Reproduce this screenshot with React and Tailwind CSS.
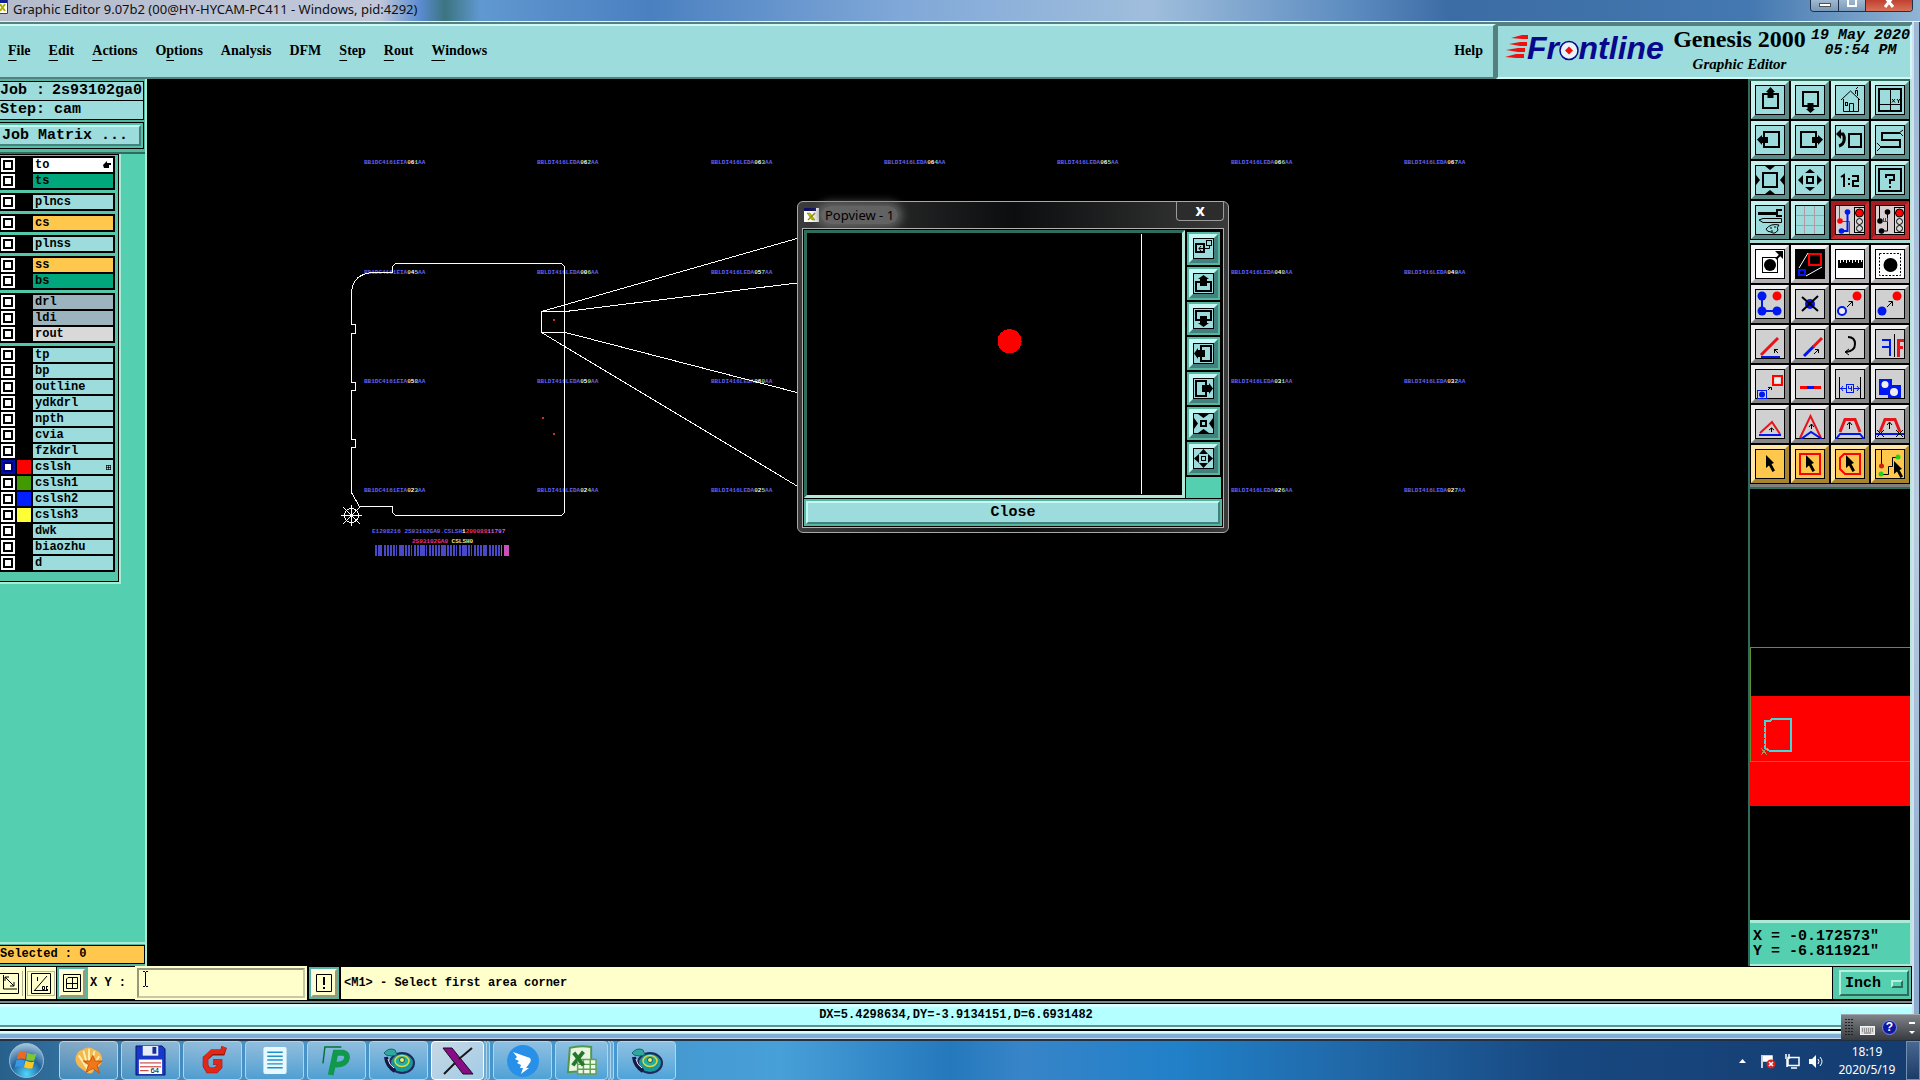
import React from "react";

const MONO = "font-['Liberation_Mono',monospace] font-bold";
const SERIF = "font-['Liberation_Serif',serif] font-bold";
const SANS = "font-['Noto_Sans',sans-serif]";

const MENUS = [
  ["", "F", "ile"],
  ["", "E", "dit"],
  ["", "A", "ctions"],
  ["O", "p", "tions"],
  ["Analysis", "", ""],
  ["DFM", "", ""],
  ["", "S", "tep"],
  ["", "R", "out"],
  ["", "W", "indows"],
];

const AQUA = "bg-[#9cdcdc]";
const LAYER_GROUPS = [
  [
    { name: "to", bg: "bg-white", mark: "hand" },
    { name: "ts", bg: "bg-[#00a67c]" },
  ],
  [{ name: "plncs", bg: AQUA }],
  [{ name: "cs", bg: "bg-[#ffc84c]" }],
  [{ name: "plnss", bg: AQUA }],
  [
    { name: "ss", bg: "bg-[#ffc84c]" },
    { name: "bs", bg: "bg-[#00a67c]" },
  ],
  [
    { name: "drl", bg: "bg-[#9cb4be]" },
    { name: "ldi", bg: "bg-[#9cb4be]" },
    { name: "rout", bg: "bg-[#d9d9d9]" },
  ],
  [
    { name: "tp", bg: AQUA },
    { name: "bp", bg: AQUA },
    { name: "outline", bg: AQUA },
    { name: "ydkdrl", bg: AQUA },
    { name: "npth", bg: AQUA },
    { name: "cvia", bg: AQUA },
    { name: "fzkdrl", bg: AQUA },
    { name: "cslsh", bg: AQUA, swatch: "bg-[#ff0000]", mark: "grid", active: true },
    { name: "cslsh1", bg: AQUA, swatch: "bg-[#409a00]" },
    { name: "cslsh2", bg: AQUA, swatch: "bg-[#0020ff]" },
    { name: "cslsh3", bg: AQUA, swatch: "bg-[#ffff38]" },
    { name: "dwk", bg: AQUA },
    { name: "biaozhu", bg: AQUA },
    { name: "d", bg: AQUA },
  ],
];

/* ---------- toolbar drawings, 30x30 grid ---------- */
const K = "#000";
const R = "#e8141c";
const B = "#0018f0";
const Box = ({ x, y, w, h, s = 2, c = K }) => (
  <rect x={x} y={y} width={w} height={h} fill="none" stroke={c} strokeWidth={s} />
);
const P = ({ d, s = 1, c = K, f = "none" }) => <path d={d} stroke={c} strokeWidth={s} fill={f} />;
const Fill = ({ d, c = K }) => <path d={d} fill={c} />;
const Cursor = ({ x = 0, y = 0 }) => (
  <path transform={`translate(${x} ${y})`} d="M11 6 L19 14 L16.500 15 L20 21.500 L17.500 23 L14 16.500 L11 19 Z" fill={K} />
);
const Signals = () => (
  <>
    <rect x="19.500" y="2.500" width="10" height="25" fill="#d8d8d8" stroke={K} />
    <circle cx="24.500" cy="8" r="4" fill="#ff0000" stroke={K} />
    <circle cx="24.500" cy="16.500" r="3" fill="none" stroke={K} />
    <circle cx="24.500" cy="23.500" r="3" fill="none" stroke={K} />
  </>
);

const TOOLS = [
  ["Pan up", <><Box x={8} y={9} w={15} h={14} /><Fill d="M15.500 2 L20 7 H18.500 V13 H12.500 V7 H11 Z" /></>],
  ["Pan down", <><Box x={8} y={7} w={15} h={14} /><Fill d="M15.500 28 L20 24 H18.500 V18 H12.500 V24 H11 Z" /></>],
  ["Home", <><P d="M6 15 L15.500 6 L25 15 M8.500 14 V26.500 H23.500 V14 M20.500 9 V5.500 H22.500 V11 M14.500 26 V18.500 H18.500 V26" /><Box x={10.5} y={17.5} w={2} h={3} s={1} /><P d="M21 4 L23 2" /></>],
  ["Zoom window", <><Box x={4} y={4} w={22} h={22} /><P d="M15.500 4 V26 M4 19.500 H26" /><P d="M17 14 L20 17.500 M20 14 L17 17.500 M22 14 L23.500 16 L25 14 M23.500 16 V18" /></>],
  ["Pan left", <><Box x={9} y={7} w={15} h={15} /><Fill d="M2 14.500 L7 10 V12 H13 V18 H7 V20 Z" /></>],
  ["Pan right", <><Box x={6} y={7} w={15} h={15} /><Fill d="M28 14.500 L23 10 V12 H17 V18 H23 V20 Z" /></>],
  ["Previous view", <><Box x={14} y={9} w={12} h={13} /><P d="M5 9 H8 Q10 12 9 16 Q8 20 4 21" s={3} /><Fill d="M1 9 L6 4 V14 Z" /></>],
  ["Serpentine", <><P d="M25 8 H7 V15 H25 V22 H5" s={2} /><P d="M24 8 L28 5 M25 8 L28 11 M6 22 L2 18 M6 22 L2 26" /></>],
  ["Zoom out", <><Box x={8} y={8} w={14} h={14} /><Fill d="M10 1 H20 L15 5 Z M10 29 H20 L15 25 Z M1 10 V20 L5 15 Z M29 10 V20 L25 15 Z" /></>],
  ["Zoom in", <><Box x={12} y={12} w={6} h={6} /><Fill d="M10 8 H20 L15 4 Z M10 22 H20 L15 26 Z M8 10 V20 L3 15 Z M22 10 V20 L27 15 Z" /></>],
  ["Scale one to two", <P s={2} d="M6 12 L9 10 V22 M14 13 V15 M14 18 V20 M17 11 H23 V16 H18 V21 H24" />],
  ["Help topic", <><Box x={4} y={4} w={22} h={22} /><P s={2} d="M11 13 V10 H19 V15 H15 V19 M15 21 V23" /></>],
  ["Tool settings", <><P s={3} d="M3 8.500 H21" /><P s={2} d="M27 5 H22 V11 H27" /><P d="M4 15 L8 13.500 H26.500 V17.500 H8 Z" /><P d="M24 20 Q16 18 11 24 Q12 27 16 27 Q20 30 23 25 Q21 23 24 20 Z M15 23 H17 M19 22 H21 M16 26 H18" /></>],
  ["Grid", <P c="#b39aa6" d="M9.500 1 V29 M19.500 1 V29 M1 10.500 H29 M1 20.500 H29" />],
  ["Snap signals", <><P c={R} d="M4.500 1 V16.500 H14.500 V29" /><P c={B} s={2} d="M12.500 7 V26 H6" /><circle cx="12.500" cy="7" r="2.800" fill={B} /><circle cx="5" cy="16" r="2.800" fill="#f00" /><circle cx="6.500" cy="26" r="2.800" fill={B} /><Signals /></>, "red"],
  ["Clearance signals", <><P s={1} d="M4.500 1 V16 M12.500 7 V26 H6" /><circle cx="12.500" cy="7" r="2.800" /><circle cx="5" cy="16" r="2.800" /><circle cx="6.500" cy="26" r="2.800" /><P c="#f00" d="M7 16.500 H13 M8.500 13 V16 M10.500 13 V16 M12.500 13 V16" /><Signals /></>, "red"],
];

const EDIT_TOOLS = [
  ["Enlarge pad", <><Box x={7.5} y={8.5} w={15} h={15} s={1} /><circle cx="15" cy="16" r="6" /><P s={2} d="M21 10 L26 5" /><Fill d="M28 2 V10 L20 2 Z" /></>, "white"],
  ["Popview", <><rect x="1" y="1" width="28" height="28" /><Box x={14} y={5} w={12} h={11} c="#f00" /><Box x={4} y={21} w={6} h={5} c={B} /><P c="#fff" d="M4 19 L13 4 M11 27 L27 18" /></>, "white"],
  ["Measure", <><rect x="3" y="11" width="25" height="8" /><P c="#fff" d="M5.500 11 V14 M8.500 11 V13 M11.500 11 V14 M14.500 11 V13 M17.500 11 V14 M20.500 11 V13 M23.500 11 V14 M26.500 11 V13" /></>, "white"],
  ["Highlight", <><rect x="4.500" y="4.500" width="21" height="22" fill="none" stroke={K} strokeDasharray="2 1.500" /><circle cx="15.500" cy="16" r="7" /></>, "white"],
  ["Connect pads", <><P c={B} s={2} d="M7 7 V22 H22" /><circle cx="7" cy="7" r="4.500" fill={B} /><circle cx="7" cy="22" r="4.500" fill={B} /><circle cx="22" cy="22" r="4.500" fill={B} /><circle cx="22" cy="7" r="4.500" fill="#f00" /></>],
  ["Delete", <><circle cx="15" cy="15" r="5" fill={B} /><P s={2} d="M7 8 L23 22 M23 7 L7 22" /></>],
  ["Copy pad", <><circle cx="22" cy="7" r="4.500" fill="#f00" /><circle cx="7" cy="22" r="4" fill="#eee" stroke={B} strokeWidth="2" /><P d="M12 18 L17 13 M13.500 12.500 H17.500 V17" /></>],
  ["Move pad", <><circle cx="22" cy="7" r="4.500" fill="#f00" /><circle cx="7" cy="22" r="4.500" fill={B} /><P d="M12 18 L17 13 M13.500 12.500 H17.500 V17" /></>],
  ["Rotate line", <><P c={R} s={3} d="M6 26 L23 9" /><P c={B} s={2} d="M6 28 H25" /><P d="M23 24 L19 20 M19.500 24 V20.500 H23" /></>],
  ["Extend line", <><P c={B} s={3} d="M9 27 L19 17" /><P c={R} s={3} d="M18 18 L27 9" /><P d="M19 25 L23 21 M20 20.500 H23.500 V24" /></>],
  ["Rotate", <><P s={2} d="M13 8 Q20 8 20 15 Q20 22 11 23" /><P d="M14 20 L10 23 L14 26" /></>],
  ["Mirror", <><P c={B} s={2} d="M7 11 H16 M15 10 V27 M7 18 H14" /><P d="M19.500 5 V28" /><P c={R} s={3} d="M23.500 28 V11.500 H29 M23 18.500 H28" /></>],
  ["Stretch pad", <><Box x={18} y={7} w={9} h={9} s={2} c="#f00" /><circle cx="22.500" cy="11.500" r="3" fill="#eee" /><Box x={2.5} y={21.5} w={9} h={8} s={1} c={B} /><circle cx="7" cy="25.500" r="3" fill={B} /><P d="M13 21 L16 18 M13 18.500 H16.500 V21" /></>],
  ["Trim line", <><P c="#f00" s={3} d="M5 18.500 H26" /><P c={B} s={3} d="M12 18.500 H19" /></>],
  ["Spacing", <><P d="M4.500 8 V29 M25.500 8 V29" /><P c={B} d="M5 19.500 H11 M19 19.500 H25 M8 17 L6 19.500 L8 22 M22 17 L24 19.500 L22 22" /><Box x={11.5} y={15.5} w={7} h={8} s={1} c={B} /><P c={B} d="M13.500 17 V19.500 H16 M16.500 17 V22" /></>],
  ["Merge shapes", <><rect x="4" y="10" width="13" height="16" fill={B} /><rect x="13" y="16" width="13" height="13" fill={B} /><circle cx="10" cy="15.500" r="3.500" fill="#eee" /><circle cx="19" cy="23" r="4" fill="#eee" /></>],
  ["Triangle up", <><P c={R} s={2} d="M5 24 L17 13 L25 25" /><P c={B} s={2} d="M4 26 H26" /><P d="M16.500 23 V19 M14 21 L16.500 19 L19 21" /></>],
  ["Sharpen", <><P c={R} s={2} d="M5 29 L15.500 7 L26 29" /><P c={B} s={2} d="M6 30 L16 23 L27 30" /><P d="M16.500 20 V15 M14 18 L16.500 15 L19 18" /></>],
  ["Bridge", <><P c={R} s={3} d="M5 23 L10 10.500 H20 L25 23" /><P c={B} s={2} d="M1 30 L5 25 H25 L29 30" /><P d="M14.500 20 V14 M12 16 L14.500 13 L17 16" /></>],
  ["Bridge cut", <><P c={R} s={3} d="M5 23 L10 10.500 H20 L25 23" /><P c={B} s={2} d="M1 25 H29" /><P d="M14.500 20 V14 M12 16 L14.500 13 L17 16 M2 21 L9 28 M9 21 L2 28 M21 21 L28 28 M28 21 L21 28" /></>],
  ["Select", <Cursor />, "gold"],
  ["Select rectangle", <><Box x={5} y={5} w={20} h={20} c="#f00" /><Cursor /></>, "gold"],
  ["Select polygon", <><P c="#f00" s={2} d="M9 5 H25 V25 H10 L5 20 V9 Z" /><Cursor /></>, "gold"],
  ["Select net", <><P d="M6.500 1 V17 M6 25.500 H13.500 V17.500 H17.500 V8.500 H23" /><circle cx="6.500" cy="17" r="2.500" fill="#d02010" /><circle cx="6" cy="25" r="2.500" fill="#20d020" /><circle cx="23" cy="8" r="2.500" fill="#20d020" /><Cursor x={8} y={6} /></>, "gold"],
];

const TONES = {
  aqua: "bg-[#9cdcdc] border-t-[#c6f2ee] border-l-[#c6f2ee] border-b-[#5c8c8a] border-r-[#5c8c8a]",
  grey: "bg-[#d0d0d0] border-t-[#efefef] border-l-[#efefef] border-b-[#868686] border-r-[#868686]",
  white: "bg-white border-t-[#f4f4f4] border-l-[#f4f4f4] border-b-[#b4b0b4] border-r-[#b4b0b4]",
  gold: "bg-[#ffc84c] border-t-[#ffe6a4] border-l-[#ffe6a4] border-b-[#a8842c] border-r-[#a8842c]",
  red: "bg-[#d8d0d0] border-t-[#a41c20] border-l-[#a41c20] border-b-[#c82c30] border-r-[#c82c30]",
};

function ToolButton({ label, tone, children }) {
  return (
    <button type="button" aria-label={label} className={`h-[38px] border-4 ${TONES[tone]}`}>
      <svg viewBox="0 0 30 30" className="mx-auto block size-[30px]">
        <rect x="0.500" y="0.500" width="29" height="29" fill="none" stroke={K} />
        {children}
      </svg>
    </button>
  );
}

/* ---------- popview drawings, 21x21 grid ---------- */
const VIEW_TOOLS = [
  ["Fit", <><Box x={3} y={6} w={8} h={8} /><Box x={13.5} y={2.5} w={5} h={5} s={1} /><P d="M16.500 8 V10.500 H6 M8 8 L6 10.500 L8 13" /></>],
  ["View up", <><Box x={3} y={9} w={15} h={9} /><Fill d="M10.500 2 L16 6 H14 V13 H7 V6 H5 Z" /></>],
  ["View down", <><Box x={3} y={3} w={15} h={9} /><Fill d="M10.500 19 L16 15 H14 V8 H7 V15 H5 Z" /></>],
  ["View left", <><Box x={8} y={3} w={10} h={15} /><Fill d="M1 10.500 L5 5 V7 H12 V14 H5 V16 Z" /></>],
  ["View right", <><Box x={3} y={3} w={10} h={15} /><Fill d="M20 10.500 L16 5 V7 H9 V14 H16 V16 Z" /></>],
  ["View zoom out", <><Box x={8} y={8} w={5} h={5} /><Fill d="M5 1 H16 L10.500 5 Z M5 20 H16 L10.500 16 Z M1 5 V16 L5 10.500 Z M20 5 V16 L16 10.500 Z" /></>],
  ["View zoom in", <><Box x={8.5} y={8.5} w={4} h={4} s={1} /><Fill d="M6 6 H15 L10.500 1 Z M6 15 H15 L10.500 20 Z M6 6 V15 L1 10.500 Z M15 6 V15 L20 10.500 Z" /></>],
];

const BEVEL_AQUA = "border-t-[#c4f8f4] border-l-[#c4f8f4] border-b-[#44807e] border-r-[#44807e] bg-[#9cdcdc]";

function Popview() {
  return (
    <section aria-label="Popview - 1" className="absolute left-[650px] top-[122px] flex h-[332px] w-[432px] flex-col rounded-md border border-[#a8a8a8] bg-gradient-to-r from-[#3c3c3c] via-[#0c0d0e] to-[#3a3a3a] px-[4px] pb-[4px]">
      <header className="flex h-[26px] shrink-0 items-center">
        <svg viewBox="0 0 15 14" className="ml-0.5 block h-[14px] w-[15px]">
          <rect width="15" height="14" fill="#fff" />
          <rect width="12" height="3" fill="#101060" />
          <path d="M3 5 H6 L11 12 H8 Z" fill="#c0c000" stroke="#707000" strokeWidth="0.500" />
          <path d="M11 5 L4 12" stroke="#909000" strokeWidth="1.500" />
        </svg>
        <h2 className={`${SANS} ml-[2px] rounded-full bg-[#707070]/80 px-1 text-[13px] leading-[18px] text-black shadow-[0_0_8px_4px_rgba(112,112,112,0.8)]`}>Popview - 1</h2>
        <button type="button" className={`${SANS} ml-auto h-[19px] w-[48px] self-start rounded-b border border-t-0 border-[#9a9a9a] bg-[#2c2c2c] pb-[3px] text-base font-bold leading-[14px] text-white`} aria-label="Close window">x</button>
      </header>
      <div className="flex min-h-0 flex-1 flex-col border border-[#b0b0b0] bg-black p-[1px]">
        <div className="flex min-h-0 flex-1">
          <div className="flex-1 border-[3px] border-b-[#b4e8d8] border-l-[#306c5c] border-r-[#b4e8d8] border-t-[#306c5c]">
            <svg viewBox="0 0 374 261" preserveAspectRatio="xMinYMin" className="block h-full w-full" shapeRendering="crispEdges">
              <circle cx="202" cy="108" r="12" fill="#ff0000" />
              <path d="M333.500 1 V260" stroke="#fff" />
            </svg>
          </div>
          <div className="ml-[1px] mr-[1px] flex w-[35px] flex-col gap-[2px] pt-[2px]">
            {VIEW_TOOLS.map(([label, art]) => (
              <div key={label} className="mx-[1px] h-[33px] shrink-0 bg-[#54b8a0] p-[2px]">
                <button type="button" aria-label={label} className={`block size-[29px] border-4 ${BEVEL_AQUA}`}>
                  <svg viewBox="0 0 21 21" className="block size-[21px]">
                    <rect x="0.500" y="0.500" width="20" height="20" fill="none" stroke={K} />
                    {art}
                  </svg>
                </button>
              </div>
            ))}
            <div className="flex-1 bg-[#54d0b0]" />
          </div>
        </div>
        <div className="mt-[1px] bg-[#54b8a0] p-[2px]">
          <button type="button" className={`${MONO} block h-[23px] w-full border-2 text-[15px] leading-[18px] ${BEVEL_AQUA}`}>Close</button>
        </div>
      </div>
    </section>
  );
}

/* ---------- board drawing ---------- */
const MARK_ROWS = [
  { y: 164, marks: [[364, "061"], [537, "062"], [711, "063"], [884, "064"], [1057, "065"], [1231, "066"], [1404, "067"]] },
  { y: 274, marks: [[364, "045"], [537, "006"], [711, "057"], [1231, "048"], [1404, "049"]] },
  { y: 383, marks: [[364, "058"], [537, "059"], [711, "060"], [1231, "031"], [1404, "032"]] },
  { y: 492, marks: [[364, "023"], [537, "024"], [711, "025"], [1231, "026"], [1404, "027"]] },
];

const BARS = Array.from({ length: 45 }, (_, i) => [375 + i * 3, i % 7 === 1 ? 3 : i % 5 === 2 ? 1 : 2]);

function Board() {
  return (
    <svg viewBox="147 79 1601 888" width="1601" height="888" className="block" fontFamily="Liberation Mono, monospace" fontWeight="bold" fontSize="6">
      {MARK_ROWS.map((row) =>
        row.marks.map(([x, n]) => (
          <text key={`${x}-${row.y}`} x={x} y={row.y} fill="#6460f0">
            {x === 364 ? "BB1DC4161EIA" : "BBLDI416LEDA"}
            <tspan fill="#f4d078">{n[0]}</tspan>
            <tspan fill="#fff">{n[1]}</tspan>
            <tspan fill="#80d8b0">{n[2]}</tspan>AA
          </text>
        ))
      )}
      <g fill="none" stroke="#fff" shapeRendering="crispEdges">
        <path d="M351.500 292.500 Q353 273 374.500 272.500 H392.500 V266.500 L395.500 263.500 H561.500 L564.500 266.500 V512.500 L561.500 515.500 H395.500 L392.500 512.500 V506.500 H359.500 L351.500 492.500 V447.500 H355.500 V439.500 H351.500 V390.500 H355.500 V382.500 H351.500 V333.500 H355.500 V324.500 H351.500 Z" />
        <path d="M541.500 311.500 H565.500 L797 283 M541.500 311.500 L797 238.500 M541.500 311.500 V332.500 H565.500 L797 392.500 M541.500 332.500 L797 486" />
        <circle cx="351.500" cy="515.500" r="7" />
        <path d="M341 515.500 H362 M351.500 505 V526 M343 507 L360 524 M360 507 L343 524" />
      </g>
      <g fill="#c83030">
        <rect x="553" y="319" width="2" height="2" />
        <rect x="542" y="417" width="2" height="2" />
        <rect x="553" y="433" width="2" height="2" />
      </g>
      <text x="372" y="533" fill="#6460f0">
        E1298216 2S93102GA0.CSLSH<tspan fill="#fff">1</tspan><tspan fill="#f03060">200088</tspan><tspan fill="#d860d8">11797</tspan>
      </text>
      <text x="412" y="543" fill="#f03090">2S93102GA0<tspan fill="#f0e890"> CSLSH0</tspan></text>
      <g shapeRendering="crispEdges">
        {BARS.map(([x, w]) => (
          <rect key={x} x={x} y="545" width={w} height="11" fill={x > 500 ? "#c850b8" : "#4848c8"} />
        ))}
      </g>
    </svg>
  );
}

/* ---------- left panel ---------- */
function LayerRow({ layer }) {
  return (
    <li className="flex h-[16px] items-start">
      <input
        type="checkbox"
        aria-label={`Show ${layer.name}`}
        className={`ml-[1px] size-[14px] shrink-0 appearance-none border-2 bg-white ${layer.active ? "border-[#0010b0] shadow-[inset_0_0_0_2px_#000078]" : "border-white shadow-[inset_0_0_0_2px_#000]"}`}
      />
      <span className={`ml-[2px] size-[14px] shrink-0 ${layer.swatch ?? "bg-black"}`} />
      <button type="button" className={`${MONO} ml-[2px] flex h-[14px] min-w-0 flex-1 items-center justify-between px-[2px] text-[12px] leading-[14px] text-black ${layer.bg}`}>
        {layer.name}
        {layer.mark === "hand" && (
          <svg viewBox="0 0 8 8" className="block size-[8px]"><path d="M0 4 L4 0 V2 H8 V4 H6 V7 H1 Z" /></svg>
        )}
        {layer.mark === "grid" && (
          <svg viewBox="0 0 5 5" className="block size-[5px]"><path d="M0 .5H5M0 2.500H5M0 4.500H5M.5 0V5M2.500 0V5M4.500 0V5" stroke="#000" strokeWidth="0.700" /></svg>
        )}
      </button>
    </li>
  );
}

function LeftPanel() {
  return (
    <aside className="flex w-[147px] shrink-0 flex-col border-r-2 border-[#a8ecd8] bg-[#54d0b0]">
      <div className="border-b-2 border-[#306c5c] bg-[#54b8a0] pb-[3px] pr-[1px] pt-[2px]">
        <dl className={`${MONO} whitespace-nowrap border-y border-r border-black bg-[#9cdcdc] text-[15px] leading-[18px]`}>
          <div className="flex h-[19px] justify-between border-b border-black pr-[1px]"><dt>Job :</dt><dd>2s93102ga0</dd></div>
          <div className="flex h-[18px] gap-[9px]"><dt>Step:</dt><dd>cam</dd></div>
        </dl>
        <div className="mt-[2px] border-y border-r border-black bg-[#54c0a8] py-[2px] pr-[2px]">
          <button type="button" className={`${MONO} block h-[21px] w-full border-b-2 border-r-2 border-t-2 pl-[2px] text-left text-[15px] leading-[17px] ${BEVEL_AQUA}`}>Job Matrix ...</button>
        </div>
      </div>
      <div className="mr-[24px] border-b-2 border-r-2 border-[#a8ecd8]">
        <ul className="border-b border-r border-t border-black bg-[#54c8a8] pb-[9px] pr-[3px] pt-[1px]">
          {LAYER_GROUPS.map((group) => (
            <li key={group[0].name} className="mb-[3px] last:mb-0">
              <ul className="bg-black pr-[2px] pt-[2px]">
                {group.map((layer) => <LayerRow key={layer.name} layer={layer} />)}
              </ul>
            </li>
          ))}
        </ul>
      </div>
      <div className="mt-auto border-t-2 border-[#a8ecd8] bg-[#54b8a0] pb-[2px] pt-[1px]">
        <p className={`${MONO} h-[19px] border-y border-r border-black bg-[#ffc84c] text-[12px] leading-[17px]`}>Selected : 0</p>
      </div>
    </aside>
  );
}

/* ---------- right panel ---------- */
function RightPanel() {
  return (
    <aside className="flex w-[164px] shrink-0 flex-col border-l-2 border-r-2 border-l-[#306c5c] border-r-[#b4e8d8] bg-black">
      <div className="grid grid-cols-4 gap-[2px] border-t-2 border-[#306c5c] px-[1px] pb-[1px]">
        {TOOLS.map(([label, art, tone]) => <ToolButton key={label} label={label} tone={tone ?? "aqua"}>{art}</ToolButton>)}
      </div>
      <div className="h-[3px] bg-[#a8dcd4]" />
      <div className="grid grid-cols-4 gap-[2px] border-b-[3px] border-[#808080] px-[1px] pb-[1px] pt-[2px]">
        {EDIT_TOOLS.map(([label, art, tone]) => <ToolButton key={label} label={label} tone={tone ?? "grey"}>{art}</ToolButton>)}
      </div>
      <div className="min-h-0 flex-1 overflow-hidden border-t-2 border-[#306c5c]">
        <svg viewBox="0 0 160 430" width="160" height="430" className="block" shapeRendering="crispEdges">
          <rect x="0" y="207" width="160" height="110" fill="#ff0000" />
          <rect x="0.500" y="158.500" width="160" height="114" fill="none" stroke="#609030" />
          <path d="M15 235 V232 H20 L22 230 H41 V262 H20 L15 259 V235" fill="none" stroke="#40d8d8" strokeWidth="2" />
          <path d="M14.500 237 V257" stroke="#ff0000" strokeDasharray="1 5" />
          <path d="M11 259 L17 266 M17 259 L11 266" stroke="#b09060" />
        </svg>
      </div>
      <div className={`${MONO} h-[46px] whitespace-pre border-b-2 border-t-[3px] border-[#a8ecd8] bg-[#54d0b0] pl-[3px] pt-[6px] text-[15px] leading-[15px]`}>
        <p>X = -0.172573"</p>
        <p>Y = -6.811921"</p>
      </div>
    </aside>
  );
}

/* ---------- header ---------- */
function Logo() {
  return (
    <svg viewBox="0 0 166 42" className="h-[42px] w-[166px] shrink-0" role="img" aria-label="Frontline">
      <g fill="#f01010">
        <path d="M9 12 L20 9 H26 V13 H20 Z" />
        <path d="M7 18 L18 16 H25 V20 H18 Z" />
        <path d="M4 24 L16 22 H23 V26 H16 Z" />
        <path d="M3 31 L14 28 H22 V32 H14 Z" />
      </g>
      <text x="25" y="33" fontFamily="Liberation Sans, sans-serif" fontSize="32" fontWeight="bold" fontStyle="italic" fill="#08088c">
        Fr<tspan fill="none">o</tspan>ntline
      </text>
      <circle cx="67" cy="24.500" r="9" fill="#e8f4f8" stroke="#08088c" strokeWidth="1.500" />
      <path d="M67 20.500 L71 24.500 L67 28.500 L63 24.500 Z" fill="#f01010" />
    </svg>
  );
}

function TopBar() {
  return (
    <div className="flex h-[55px] shrink-0 bg-[#9cdcdc]">
      <nav aria-label="Main" className={`${SERIF} flex min-w-0 flex-1 items-center gap-[18px] border-b-2 border-r-[3px] border-t-2 border-b-[#548080] border-r-[#548080] border-t-[#d0f8f4] px-2 pb-[3px] text-[14px]`}>
        {MENUS.map(([a, u, b]) => (
          <button type="button" key={a + u + b}>{a}{u && <span className="underline underline-offset-[5px]">{u}</span>}{b}</button>
        ))}
        <button type="button" className="ml-auto mr-[2px]">Help</button>
      </nav>
      <div className="flex w-[416px] shrink-0 border-2 border-b-[#d0f8f4] border-l-[#548080] border-r-[#d0f8f4] border-t-[#548080] pl-[4px]">
        <Logo />
        <div className={`${SERIF} flex flex-1 flex-col items-center whitespace-nowrap`}>
          <strong className="text-[24px] leading-[26px]">Genesis 2000</strong>
          <em className="mt-[3px] text-[15px] leading-[18px]">Graphic Editor</em>
        </div>
        <time className={`${MONO} mt-[2px] whitespace-nowrap text-center text-[15px] italic leading-[15px]`}>19 May 2020<br />05:54 PM</time>
      </div>
    </div>
  );
}

function TitleBar() {
  return (
    <header className="flex h-[22px] shrink-0 items-start border-b border-[#e8f0f8] bg-[linear-gradient(90deg,#b4bccc_0px,#c0c8da_380px,#5a8cd0_420px,#3c7480_445px,#6098d0_480px,#4a80c0_650px,#80a8d8_900px,#a0bedc_1150px,#5c8cc0_1350px,#3c6ca4_1450px,#4478b0_1750px,#90b4d4_1920px)]">
      <svg viewBox="0 0 8 14" className="h-[14px] w-[8px] shrink-0"><rect width="8" height="14" fill="#fff" /><rect width="8" height="3" fill="#102090" /><path d="M0 4 L5 11 M5 4 L0 11" stroke="#b0b000" strokeWidth="2" /><path d="M7.500 0 V13.500 H0" stroke="#404040" fill="none" /></svg>
      <h1 className={`${SANS} ml-[5px] text-[13px] leading-[18px] text-[#101010]`}>Graphic Editor 9.07b2 (00@HY-HYCAM-PC411 - Windows, pid:4292)</h1>
      <div className="ml-auto mr-[7px] flex h-[12px] overflow-hidden rounded-b border border-t-0 border-[#20304c]">
        <button type="button" aria-label="Minimize" className="flex w-[28px] items-start justify-center border-r border-[#20304c] bg-gradient-to-b from-[#a0b8d0] to-[#7898b8] pt-[3px]"><span className="h-[4px] w-[12px] border border-[#505050] bg-white" /></button>
        <button type="button" aria-label="Restore" className="flex w-[27px] items-start justify-center border-r border-[#20304c] bg-gradient-to-b from-[#a0b8d0] to-[#7898b8]"><span className="h-[7px] w-[10px] border-2 border-t-0 border-white" /></button>
        <button type="button" aria-label="Close" className="flex w-[46px] justify-center bg-gradient-to-b from-[#c04030] to-[#d87058]"><svg viewBox="0 0 12 8" className="h-[8px] w-[12px]"><path d="M2 -3 L10 7 M10 -3 L2 7" stroke="#fff" strokeWidth="3" /></svg></button>
      </div>
    </header>
  );
}

/* ---------- command line ---------- */
const CREAM = "bg-[#ffffcc]";

function CommandBar() {
  return (
    <div className={`${MONO} flex h-[35px] shrink-0 border-b-2 border-t border-[#000] bg-black text-[12px]`}>
      <button type="button" aria-label="Line mode" className={`w-[25px] ${CREAM} py-[3px]`}>
        <svg viewBox="0 0 24 25" className="block h-[25px] w-[24px]"><path d="M0 2.500 H18.500 V22.500 H0 M3.500 4 V18 H17 M5 6 L14 15 M5 10 V6 H9 M10 15 H14 V11" fill="none" stroke="#000" /><path d="M22.500 0 V25" stroke="#b0b090" /></svg>
      </button>
      <button type="button" aria-label="Angle mode" className={`ml-[1px] w-[30px] ${CREAM} py-[3px]`}>
        <svg viewBox="0 0 30 25" className="block h-[25px] w-[30px]"><rect x="1.500" y="0.500" width="27" height="24" fill="none" stroke="#b8b898" /><path d="M5.500 2.500 H24.500 V22.500 H5.500 Z M8 19.500 H22 M8 20 L21 5 M11.500 6 V10 M16.500 15.500 H18.500 V18.500 H16.500 Z M20.500 15 V19 M22 15 L20 17 L22 19" fill="none" stroke="#000" /></svg>
      </button>
      <div className="ml-[1px] w-[30px] bg-[#54b8a0] p-[2px]">
        <button type="button" aria-label="Grid snap" className={`flex h-full w-full items-center justify-center border-2 border-b-[#98987c] border-l-[#ffffe8] border-r-[#98987c] border-t-[#ffffe8] ${CREAM}`}>
          <svg viewBox="0 0 18 18" className="size-[18px]"><path d="M.5.5H17.500V17.500H.5Z M5 3.500 H14.500 V14.500 H3.500 V5 Z M9.500 3 V15 M3 9.500 H15" fill="none" stroke="#000" /></svg>
        </button>
      </div>
      <label htmlFor="xy" className={`w-[48px] border-l border-[#54b8a0] pl-[2px] leading-[33px] ${CREAM} whitespace-nowrap`}>X Y :</label>
      <div className="relative ml-[1px] w-[170px]">
        <input id="xy" type="text" defaultValue="" className={`block h-full w-full border-[3px] border-b-[#c8c8a8] border-l-[#98987c] border-r-[#c8c8a8] border-t-[#98987c] px-1 outline outline-2 -outline-offset-1 outline-[#ffffcc] ${CREAM}`} />
        <svg viewBox="0 0 7 16" className="absolute left-[6px] top-[4px] h-[16px] w-[7px]" aria-hidden="true"><path d="M1 .5 H3 M4 .5 H6 M3.500 1 V15 M1 15.500 H3 M4 15.500 H6" stroke="#000" /></svg>
      </div>
      <div className="ml-[3px] w-[30px] bg-[#54b8a0] p-[2px]">
        <button type="button" aria-label="Messages" className={`flex h-full w-full items-center justify-center border-2 border-b-[#98987c] border-l-[#ffffe8] border-r-[#98987c] border-t-[#ffffe8] ${CREAM}`}>
          <svg viewBox="0 0 18 18" className="size-[18px]"><path d="M1.500.5H16.500V17.500H1.500Z" fill="none" stroke="#000" /><path d="M9 3 V11 M9 13 V15" stroke="#000" strokeWidth="2" /></svg>
        </button>
      </div>
      <output className={`ml-[2px] min-w-0 flex-1 pl-[3px] leading-[33px] ${CREAM}`}>&lt;M1&gt; - Select first area corner</output>
      <div className="ml-[1px] mr-[1px] w-[78px] bg-[#54c8a8] py-[3px] pl-[6px] pr-[2px]">
        <button type="button" className="flex h-[26px] w-full items-center justify-between border-2 border-b-[#306c5c] border-l-[#b4f0dc] border-r-[#306c5c] border-t-[#b4f0dc] bg-[#54d0b0] px-[4px] pt-[2px] text-[15px]">
          Inch
          <span className="h-[8px] w-[12px] border-2 border-b-[#306c5c] border-l-[#b4f0dc] border-r-[#306c5c] border-t-[#b4f0dc]" />
        </button>
      </div>
    </div>
  );
}

/* ---------- taskbar ---------- */
const DiscIcon = () => (
  <svg viewBox="0 0 32 26" className="h-[26px] w-[32px]">
    <ellipse cx="19" cy="15" rx="12" ry="10" fill="#189898" stroke="#202860" strokeWidth="2" />
    <ellipse cx="19" cy="13" rx="7" ry="5.500" fill="#20b0a0" stroke="#e0d840" strokeWidth="1.500" />
    <circle cx="19" cy="12" r="2.500" fill="#f0f060" stroke="#205060" />
    <path d="M1 5 Q6 -1 12 2 L14 7 Q8 9 3 7 Z" fill="#30a8a0" stroke="#186868" />
    <path d="M3 9 Q4 18 12 23" stroke="#181848" strokeWidth="4" fill="none" />
    <path d="M5 11 Q6 17 11 20" stroke="#e8f0f0" fill="none" />
  </svg>
);

const APPS = [
  { label: "Seashell", icon: <svg viewBox="0 0 32 32" className="size-[30px]"><path d="M15 29 L9 25 Q0 20 2 11 Q4 5 9 4 Q16 -1 22 4 Q29 6 30 13 Q31 20 22 25 L19 29 Z" fill="#f4b850" /><path d="M16 27 L5 10 M16 27 L10 5 M16 27 V3 M16 27 L22 5 M16 27 L27 11" stroke="#fff0b0" strokeWidth="2" /><path d="M20 10 L22.500 16 L30 16 L24.500 20.500 L27 29 L20 24 L13 28 L15.500 20 L10 16 L17.500 16 Z" fill="#f07818" stroke="#c85008" /></svg> },
  { label: "Floppy", icon: <svg viewBox="0 0 32 32" className="size-[31px]"><path d="M1 1 H28 L31 4 V31 H1 Z" fill="#1838c8" stroke="#081868" /><rect x="8" y="1" width="16" height="10" fill="#e8ecf4" /><rect x="18" y="2" width="4" height="7" fill="#1030a0" /><rect x="4" y="15" width="24" height="15" fill="#fff" /><path d="M5 18.500 H27 M5 22.500 H27 M5 26.500 H14" stroke="#c02020" /><text x="16" y="29" fontSize="8" fontFamily="Liberation Sans, sans-serif">64</text></svg> },
  { label: "Genesis", icon: <svg viewBox="0 0 30 32" className="h-[30px] w-[28px]"><path d="M27 1 L25 7 H14 L7 13 V21 L10 26 H18 L22 22 V17 H15" fill="none" stroke="#981008" strokeWidth="6" /><path d="M27 1 L25 6 H14 L7 13 V21 L10 26 H18 L22 22 V17 H15" fill="none" stroke="#e02818" strokeWidth="5" /></svg> },
  { label: "Notes", icon: <svg viewBox="0 0 26 30" className="h-[29px] w-[26px]"><rect x="1" y="1" width="24" height="28" rx="2" fill="#e8f8ff" /><path d="M5 6.500H21M5 10.500H21M5 14.500H21M5 18.500H21M5 22.500H21" stroke="#2090c8" strokeWidth="1.500" /></svg> },
  { label: "P tool", icon: <svg viewBox="0 0 30 32" className="h-[31px] w-[29px]"><path d="M9 31 L14 8 H22 Q28 10 25 16 Q22 21 13 20" fill="none" stroke="#10984c" strokeWidth="6" /><path d="M1 19 L3 2 H20" fill="none" stroke="#087038" strokeWidth="1.500" /></svg> },
  { label: "Disc viewer", icon: <DiscIcon /> },
  { label: "X server", active: true, stacked: true, icon: <svg viewBox="0 0 34 28" className="h-[28px] w-[34px]"><path d="M2 1 H11 L32 27 H22 Z" fill="#880c88" stroke="#181018" /><path d="M31 1 L18 12 M14 16 L3 27" stroke="#181818" strokeWidth="2" /></svg> },
  { label: "DingTalk", icon: <svg viewBox="0 0 32 32" className="size-[32px]"><circle cx="16" cy="16" r="16" fill="#2890e8" /><path d="M6 7 L23 13 Q25 15 22 19 L19 23 H22 L14 29 L16 23 H13 L14 20 L10 18 L12 16 L8 14 L10 12 Z" fill="#fff" /></svg> },
  { label: "Excel", stacked: true, icon: <svg viewBox="0 0 32 32" className="size-[31px]"><path d="M4 3 Q14 0 26 2 V26 L2 28 Z" fill="#e8f4e0" stroke="#509848" strokeWidth="2" /><path d="M18 7 L7 21" stroke="#207828" strokeWidth="4" /><path d="M12 15 H31 V30 H12 Z M12 20 H31 M12 25 H31 M18 15 V30 M25 15 V30" fill="#f0f8ec" stroke="#60a050" strokeWidth="1.500" /><path d="M8 8 L18 21" stroke="#207828" strokeWidth="4" /></svg> },
  { label: "Disc editor", icon: <DiscIcon /> },
];

function Taskbar() {
  return (
    <footer className="flex h-[41px] shrink-0 items-stretch border-t-2 border-[#203040] bg-[linear-gradient(90deg,#28608c_0px,#4890c4_200px,#4498d0_650px,#48a0d8_780px,#2478bc_950px,#3884c8_1020px,#2080c8_1180px,#2068a8_1350px,#184880_1560px,#143c70_1920px)]">
      <button type="button" aria-label="Start" className="flex w-[59px] items-center pl-[8px]">
        <svg viewBox="0 0 38 38" className="size-[37px]">
          <defs><radialGradient id="orb" cx="50%" cy="90%" r="90%"><stop offset="0" stopColor="#50d8ff" /><stop offset="0.500" stopColor="#20629c" /><stop offset="1" stopColor="#a8c8dc" /></radialGradient></defs>
          <circle cx="19" cy="19" r="17.500" fill="url(#orb)" stroke="#98bcd4" />
          <path d="M11 11 Q15 9 19 11 L17.500 18 Q14 16 9 18 Z" fill="#f06820" />
          <path d="M20 11 Q25 14 29 12 L27 19 Q23 20 18.500 18 Z" fill="#80c830" />
          <path d="M8.500 19 Q13 17 17 19 L15.500 26 Q11 24 7 26 Z" fill="#3898e8" />
          <path d="M18 19 Q23 22 27 20 L25 27 Q21 28 16.500 26 Z" fill="#fcc820" />
        </svg>
      </button>
      <div className="flex gap-[3px]">
        {APPS.map(({ label, icon, active, stacked }) => (
          <div key={label} className="flex w-[59px]">
            <button type="button" aria-label={label} className={`flex min-w-0 flex-1 items-center justify-center rounded-sm border ${active ? "border-white bg-gradient-to-br from-[#c8d8e4] to-[#a0cce8]" : "border-[#b0d4e8] bg-gradient-to-b from-white/40 to-[#58b4e4]/40"}`}>{icon}</button>
            {stacked && (
              <>
                <span className="w-[3px] rounded-r-sm border-y border-r border-[#b0d4e8] bg-white/20" />
                <span className="w-[3px] rounded-r-sm border-y border-r border-[#b0d4e8] bg-white/20" />
              </>
            )}
          </div>
        ))}
      </div>
      <div className={`${SANS} ml-auto flex items-center text-white`}>
        <svg viewBox="0 0 90 20" className="mr-[10px] h-[20px] w-[90px]" fill="none">
          <path d="M4 12 L7.500 8 L11 12 Z" fill="#fff" />
          <path d="M27 4 V17 M28 5 H37 V10 H28" stroke="#fff" strokeWidth="1.500" fill="#fff" /><circle cx="36" cy="13" r="4.500" fill="#d82020" /><path d="M34 11 L38 15 M38 11 L34 15" stroke="#fff" strokeWidth="1.500" />
          <path d="M53 6.500 H64 V14.500 H53 Z M56 17 H62 M51 3 V8 M54 3 V8 M52 8 V16" stroke="#fff" strokeWidth="1.500" />
          <path d="M74 8 H77 L81 4 V17 L77 13 H74 Z" fill="#fff" /><path d="M83 8 Q85 10.500 83 13 M85 6 Q89 10.500 85 15" stroke="#fff" />
        </svg>
        <time className="mr-[7px] w-[64px] whitespace-nowrap text-center text-[12px] leading-[18px]">18:19<br />2020/5/19</time>
        <button type="button" aria-label="Show desktop" className="h-full w-[14px] border border-[#7090b0] bg-gradient-to-b from-[#486890] to-[#1c3c68]" />
      </div>
    </footer>
  );
}

function LanguageBar() {
  return (
    <div className="absolute bottom-[40px] right-0 flex h-[26px] w-[79px] items-center gap-[7px] border-t border-[#a0a8b0] bg-gradient-to-b from-[#808488] to-[#383c40] pl-[4px]">
      <svg viewBox="0 0 8 17" className="h-[17px] w-[8px]"><path d="M1 0 V17 M4 0 V17 M7 0 V17" stroke="#202020" strokeWidth="2" strokeDasharray="1 2" /></svg>
      <svg viewBox="0 0 15 14" className="h-[14px] w-[15px]"><rect x="0.500" y="5.500" width="14" height="8" fill="#d8d8d8" stroke="#f4f4f4" /><path d="M2 8 H13 M2 10 H13" stroke="#505050" strokeDasharray="1 1" /><path d="M4 12 H11 M7 5 Q8 2 12 2" stroke="#707070" fill="none" /></svg>
      <button type="button" className="size-[15px] rounded-full border border-[#8090e0] bg-[#1018a0] text-center font-['Liberation_Sans',sans-serif] text-[12px] font-bold leading-[13px] text-white">?</button>
      <svg viewBox="0 0 6 14" className="ml-[5px] h-[14px] w-[6px]"><path d="M0 1 H6 V3 H0 Z M0 10 H6 L3 13 Z" fill="#fff" /></svg>
    </div>
  );
}

export default function App() {
  return (
    <div className="relative flex h-screen flex-col overflow-hidden bg-[#88b0d8]">
      <TitleBar />
      <div className="flex min-h-0 flex-1">
        <main className="flex min-w-0 flex-1 flex-col border-t-2 border-[#548080]">
          <TopBar />
          <div className="flex min-h-0 flex-1 bg-black">
            <LeftPanel />
            <div className="relative min-w-0 flex-1 overflow-hidden">
              <Board />
              <Popview />
            </div>
            <RightPanel />
          </div>
          <CommandBar />
          <div className={`${MONO} h-[26px] shrink-0 border-b-2 border-t-2 border-b-[#609090] border-t-[#788c8c] bg-[#b4ffff] text-center text-[12px] leading-[25px] shadow-[inset_0_1px_0_#000,inset_0_4px_0_#d8ffff]`}>DX=5.4298634,DY=-3.9134151,D=6.6931482</div>
          <div className="h-[6px] shrink-0 border-y-2 border-[#d8fffc] bg-black" />
          <div className="h-[6px] shrink-0 border-b border-t border-[#c8dcf0] bg-[#84acd8]" />
        </main>
        <div className="w-[8px] shrink-0 border-l-2 border-r border-l-[#d0e0f0] border-r-[#203858] bg-gradient-to-b from-[#9cb8d4] via-[#b8cce0] to-[#88a8cc]" />
      </div>
      <Taskbar />
      <LanguageBar />
    </div>
  );
}
